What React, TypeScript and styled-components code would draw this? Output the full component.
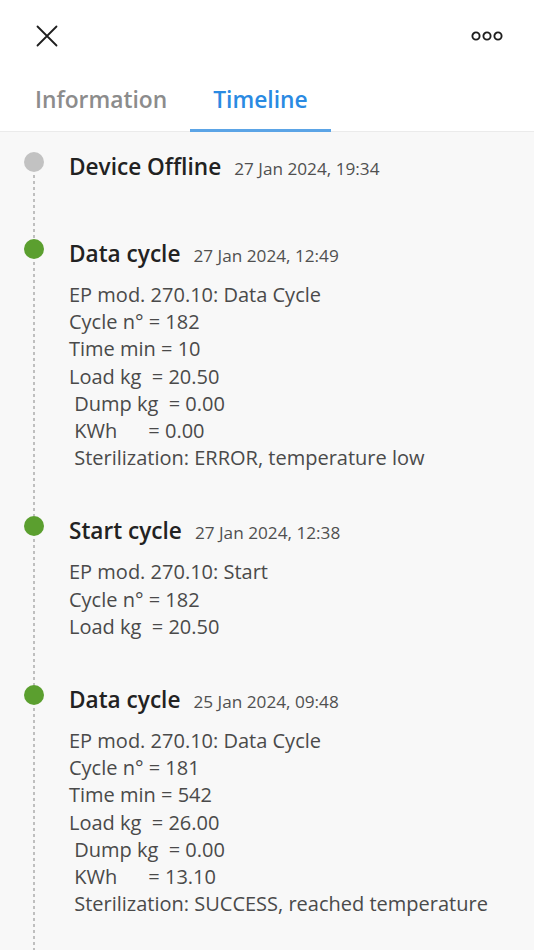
import React from "react";
import styled, { createGlobalStyle } from "styled-components";

const Global = createGlobalStyle`
  html, body { margin: 0; padding: 0; }
  body {
    background: #f8f8f8;
    font-family: "Open Sans", "Noto Sans", sans-serif;
    -webkit-font-smoothing: antialiased;
  }
`;

const Page = styled.div`
  width: 534px;
  min-height: 950px;
  background: #f8f8f8;
  overflow: hidden;
`;

const Header = styled.header`
  background: #ffffff;
  border-bottom: 1px solid #ebebeb;
`;

const TopBar = styled.div`
  height: 68px;
  padding: 2px 27px 0 27px;
  display: flex;
  align-items: center;
  justify-content: space-between;
`;

const IconButton = styled.button`
  border: none;
  background: none;
  padding: 0;
  display: flex;
  align-items: center;
  justify-content: center;
  width: 40px;
  height: 40px;
  color: #1e1e1e;
`;

const Tabs = styled.nav`
  display: flex;
  padding-left: 12px;
  height: 61px;
`;

const Tab = styled.div<{ $active?: boolean }>`
  display: flex;
  align-items: center;
  padding: 0 23px 4px;
  font-size: 22.8px;
  font-weight: 600;
  color: ${(p) => (p.$active ? "#2a8ae2" : "#8c8c8c")};
  box-shadow: ${(p) => (p.$active ? "inset 0 -3px 0 #5ba4e6" : "none")};
  margin-bottom: -1px;
  position: relative;
  z-index: 1;
`;

const Timeline = styled.div`
  padding-top: 20px;
`;

const Entry = styled.div`
  display: grid;
  grid-template-columns: 68px 1fr;
`;

const Rail = styled.div`
  display: flex;
  flex-direction: column;
  align-items: center;
`;

const Dot = styled.div<{ $color: string }>`
  width: 20px;
  height: 20px;
  border-radius: 50%;
  background: ${(p) => p.$color};
  flex-shrink: 0;
`;

const Line = styled.div`
  flex: 1;
  width: 2px;
  margin-top: 3px;
  background: repeating-linear-gradient(
    to bottom,
    #9a9a9a 0 3px,
    transparent 3px 6px
  );
  transform: scaleX(0.6);
`;

const Content = styled.div`
  padding-bottom: 45px;
`;

const TitleRow = styled.div`
  display: flex;
  align-items: baseline;
  gap: 13px;
  height: 28px;
  line-height: 29px;
  margin-left: 1px;
`;

const Title = styled.span`
  font-size: 22.6px;
  font-weight: 600;
  color: #222222;
`;

const DateText = styled.span`
  font-size: 17.2px;
  color: #505050;
`;

const Body = styled.div`
  padding-top: 14px;
  margin-left: 1px;
  font-size: 20px;
  line-height: 27.2px;
  color: #4a4a4a;
  white-space: pre;
`;

type Item = {
  title: string;
  date: string;
  color: string;
  lines: string[];
};

const items: Item[] = [
  { title: "Device Offline", date: "27 Jan 2024, 19:34", color: "#c2c2c2", lines: [] },
  {
    title: "Data cycle",
    date: "27 Jan 2024, 12:49",
    color: "#5b9f2f",
    lines: [
      "EP mod. 270.10: Data Cycle",
      "Cycle n° = 182",
      "Time min = 10",
      "Load kg  = 20.50",
      " Dump kg  = 0.00",
      " KWh      = 0.00",
      " Sterilization: ERROR, temperature low",
    ],
  },
  {
    title: "Start cycle",
    date: "27 Jan 2024, 12:38",
    color: "#5b9f2f",
    lines: ["EP mod. 270.10: Start", "Cycle n° = 182", "Load kg  = 20.50"],
  },
  {
    title: "Data cycle",
    date: "25 Jan 2024, 09:48",
    color: "#5b9f2f",
    lines: [
      "EP mod. 270.10: Data Cycle",
      "Cycle n° = 181",
      "Time min = 542",
      "Load kg  = 26.00",
      " Dump kg  = 0.00",
      " KWh      = 13.10",
      " Sterilization: SUCCESS, reached temperature",
    ],
  },
];

export default function App() {
  return (
    <Page>
      <Global />
      <Header>
        <TopBar>
          <IconButton aria-label="Close">
            <svg width="22" height="22" viewBox="0 0 22 22" fill="none">
              <path d="M1.5 1.5 L20.5 20.5 M20.5 1.5 L1.5 20.5" stroke="#1e1e1e" strokeWidth="1.8" strokeLinecap="round" />
            </svg>
          </IconButton>
          <IconButton aria-label="More">
            <svg width="32" height="12" viewBox="0 0 32 12" fill="none">
              <circle cx="5" cy="6" r="3.6" stroke="#1e1e1e" strokeWidth="1.9" />
              <circle cx="16" cy="6" r="3.6" stroke="#1e1e1e" strokeWidth="1.9" />
              <circle cx="27" cy="6" r="3.6" stroke="#1e1e1e" strokeWidth="1.9" />
            </svg>
          </IconButton>
        </TopBar>
        <Tabs>
          <Tab>Information</Tab>
          <Tab $active>Timeline</Tab>
        </Tabs>
      </Header>
      <Timeline>
        {items.map((it, i) => (
          <Entry key={i}>
            <Rail>
              <Dot $color={it.color} />
              <Line />
            </Rail>
            <Content>
              <TitleRow>
                <Title>{it.title}</Title>
                <DateText>{it.date}</DateText>
              </TitleRow>
              <Body>{it.lines.join("\n")}</Body>
            </Content>
          </Entry>
        ))}
      </Timeline>
    </Page>
  );
}
